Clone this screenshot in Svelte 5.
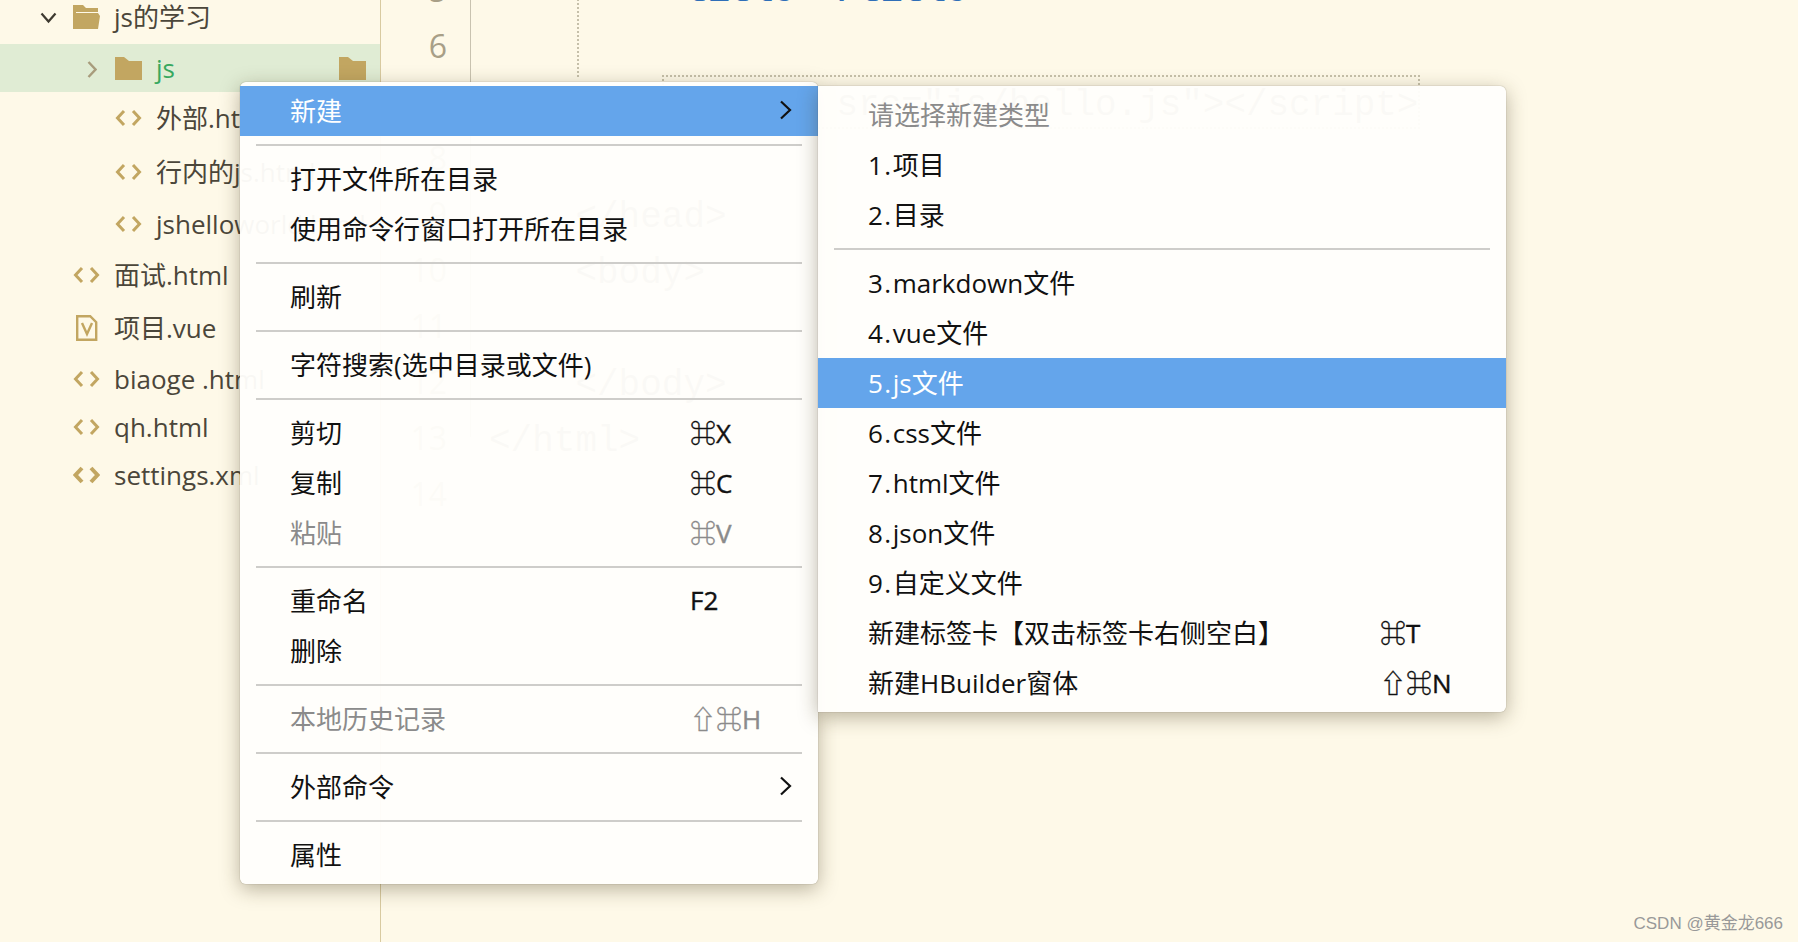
<script lang="ts">
	type TreeRow = { name: string; level: number; h: number; icon: string; caret?: string; active?: boolean };
	type MenuRow = { label?: string; key?: string; sep?: boolean; off?: boolean; on?: boolean; sub?: boolean };

	const tree: TreeRow[] = [
		{ name: 'js的学习', level: 0, h: 54, icon: 'open', caret: 'down' },
		{ name: 'js', level: 1, h: 48, icon: 'folder', caret: 'right', active: true },
		{ name: '外部.html', level: 1, h: 52, icon: 'code' },
		{ name: '行内的js.html', level: 1, h: 55, icon: 'code' },
		{ name: 'jshelloworld.html', level: 1, h: 49, icon: 'code' },
		{ name: '面试.html', level: 0, h: 54, icon: 'code' },
		{ name: '项目.vue', level: 0, h: 51, icon: 'vue' },
		{ name: 'biaoge .html', level: 0, h: 51, icon: 'code' },
		{ name: 'qh.html', level: 0, h: 46, icon: 'code' },
		{ name: 'settings.xml', level: 0, h: 50, icon: 'xml' }
	];

	const lines = [
		'<title></title>',
		'',
		'<script src="js/hello.js"></' + 'script>',
		'',
		'    </head>',
		'    <body>',
		'',
		'    </body>',
		'</html>',
		''
	];

	const mainMenu: MenuRow[] = [
		{ label: '新建', on: true, sub: true },
		{ sep: true },
		{ label: '打开文件所在目录' },
		{ label: '使用命令行窗口打开所在目录' },
		{ sep: true },
		{ label: '刷新' },
		{ sep: true },
		{ label: '字符搜索(选中目录或文件)' },
		{ sep: true },
		{ label: '剪切', key: '⌘X' },
		{ label: '复制', key: '⌘C' },
		{ label: '粘贴', key: '⌘V', off: true },
		{ sep: true },
		{ label: '重命名', key: 'F2' },
		{ label: '删除' },
		{ sep: true },
		{ label: '本地历史记录', key: '⇧⌘H', off: true },
		{ sep: true },
		{ label: '外部命令', sub: true },
		{ sep: true },
		{ label: '属性' }
	];

	const newMenu: MenuRow[] = [
		{ label: '请选择新建类型', off: true },
		{ label: '1.项目' },
		{ label: '2.目录' },
		{ sep: true },
		{ label: '3.markdown文件' },
		{ label: '4.vue文件' },
		{ label: '5.js文件', on: true },
		{ label: '6.css文件' },
		{ label: '7.html文件' },
		{ label: '8.json文件' },
		{ label: '9.自定义文件' },
		{ label: '新建标签卡【双击标签卡右侧空白】', key: '⌘T' },
		{ label: '新建HBuilder窗体', key: '⇧⌘N' }
	];

	// the numbered entries run a little wider in the reference
	function prefix(label = '') {
		return /^\d\./.test(label) ? label.slice(0, 2) : '';
	}
</script>

{#snippet folder()}
	<svg width="27" height="23" viewBox="0 0 27 23"><path d="M0 0h9l5 4h13v19H0z" fill="#c2a661" /></svg>
{/snippet}

{#snippet menu(rows: MenuRow[], cls: string)}
	<div class="menu {cls}">
		{#each rows as row}
			{#if row.sep}
				<div class="sep"></div>
			{:else}
				<div class="item" class:on={row.on} class:off={row.off}>
					<span class="label">{#if prefix(row.label)}<span class="prefix">{prefix(row.label)}</span>{/if}{row.label?.slice(prefix(row.label).length)}</span>
					{#if row.key}<span class="key">{row.key}</span>{/if}
					{#if row.sub}
						<svg class="arrow" width="13" height="20" viewBox="0 0 13 20"><path d="M2 1.500 11 10l-9 8.500" fill="none" stroke="currentColor" stroke-width="2.200" /></svg>
					{/if}
				</div>
			{/if}
		{/each}
	</div>
{/snippet}

<div class="screen">
	<aside class="tree">
		{#each tree as row}
			<div class="row" class:active={row.active} style="height: {row.h}px; padding-left: {40 + row.level * 42}px;">
				<span class="caret">
					{#if row.caret === 'down'}
						<svg width="17" height="12" viewBox="0 0 17 12"><path d="M1.500 1.500 8.500 9.500l7-8" fill="none" stroke="#3e3a30" stroke-width="2.200" /></svg>
					{:else if row.caret === 'right'}
						<svg width="10" height="17" viewBox="0 0 10 17"><path d="M1.500 1 8.500 8.500l-7 7.500" fill="none" stroke="#a89c7c" stroke-width="2.400" /></svg>
					{/if}
				</span>
				<span class="icon">
					{#if row.icon === 'open'}
						<svg width="27" height="24" viewBox="0 0 27 24"><path d="M0 24V0h10l3 3h12v4H3v1h22l2 3-2 13z" fill="#c2a661" /></svg>
					{:else if row.icon === 'folder'}
						{@render folder()}
					{:else if row.icon === 'code' || row.icon === 'xml'}
						<svg width="27" height="18" viewBox="0 0 27 18"><path d="M9 2 2.500 9 9 16M18 2l6.500 7L18 16" fill="none" stroke="#c2a661" stroke-width={row.icon === 'xml' ? 4 : 3} /></svg>
					{:else if row.icon === 'vue'}
						<svg width="22" height="26" viewBox="0 0 22 26"><path d="M1.200 1.200h13l6 6v17.600H1.200z" fill="none" stroke="#c2a661" stroke-width="2.400" /><path d="M6 8l5 11 5-11" fill="none" stroke="#c2a661" stroke-width="2.400" /></svg>
					{/if}
				</span>
				<span class="name">{row.name}</span>
				{#if row.active}
					<span class="end-folder">{@render folder()}</span>
				{/if}
			</div>
		{/each}
	</aside>

	<main class="editor">
		<div class="gutter">
			{#each lines as _, i}
				<div class="num">{i + 5}</div>
			{/each}
		</div>
		<div class="code">
			{#each lines as line, i}
				{#if i === 0}
					<div class="line title">{line}</div>
				{:else if i === 2}
					<div class="line"><span class="current">{line}</span></div>
				{:else}
					<div class="line">{line}</div>
				{/if}
			{/each}
		</div>
		<div class="fold-line"></div>
		<div class="indent-line"></div>
	</main>

	{@render menu(mainMenu, 'main-menu')}
	{@render menu(newMenu, 'new-menu')}

	<div class="watermark">CSDN @黄金龙666</div>
</div>

<style>
	:global(body) {
		margin: 0;
		background: #fef9e8;
	}

	.screen {
		position: relative;
		display: flex;
		width: 1798px;
		height: 942px;
		overflow: hidden;
		background: #fef9e8;
		font-family: 'Open Sans', 'Noto Sans CJK SC', 'DejaVu Sans', sans-serif;
	}

	.tree {
		flex: none;
		width: 380px;
		margin-top: -10px;
		border-right: 1px solid #d8caa0;
	}

	.row {
		display: flex;
		align-items: center;
		box-sizing: border-box;
		font-size: 26px;
		color: #4b463a;
		white-space: nowrap;
	}

	.row.active {
		background: #e0ecd4;
		color: #38a85f;
	}

	.caret {
		flex: none;
		width: 33px;
		display: flex;
		padding-top: 2px;
	}

	.row.active .caret {
		padding-left: 5px;
		box-sizing: border-box;
	}

	.icon {
		flex: none;
		width: 27px;
		display: flex;
		justify-content: center;
		margin-right: 14px;
	}

	.name {
		flex: 1;
		line-height: 1;
	}

	.end-folder {
		display: flex;
		flex: none;
		width: 27px;
		margin-right: 14px;
	}

	.editor {
		position: relative;
		flex: 1;
		display: flex;
		margin-top: -38px;
	}

	.gutter {
		flex: none;
		width: 66px;
		padding-right: 23px;
	}

	.num {
		height: 56px;
		line-height: 56px;
		text-align: right;
		font-size: 32px;
		color: #a89f87;
	}

	.code {
		flex: 1;
		padding: 4px 0 0 19px;
		font-family: 'Liberation Mono', monospace;
		font-size: 36px;
		color: #7c7768;
	}

	.line {
		height: 56px;
		line-height: 56px;
		white-space: pre;
	}

	.line.title {
		height: 52px;
		line-height: 52px;
		margin-bottom: 4px;
		padding-left: 176px;
		color: #2f6fb8;
		font-weight: 700;
	}

	.current {
		display: inline-block;
		margin-left: 175px;
		height: 50px;
		line-height: 58px;
		vertical-align: top;
		margin-top: -1px;
		letter-spacing: -0.05px;
		outline: 2px dotted #c6c0aa;
	}

	.fold-line {
		position: absolute;
		left: 89px;
		top: 0;
		width: 1px;
		height: 475px;
		background: #c9c3b0;
	}

	.indent-line {
		position: absolute;
		left: 196px;
		top: 0;
		height: 115px;
		border-left: 2px dotted #c6c0aa;
	}

	.menu {
		position: absolute;
		box-sizing: border-box;
		padding: 4px 0;
		border-radius: 6px;
		background: rgba(255, 254, 251, 0.965);
		box-shadow:
			0 0 1px rgba(50, 45, 30, 0.65),
			0 5px 20px rgba(60, 50, 20, 0.36);
		font-size: 26px;
		color: #111;
	}

	.main-menu {
		left: 240px;
		top: 82px;
		width: 578px;
		height: 802px;
	}

	.new-menu {
		left: 818px;
		top: 86px;
		width: 688px;
		height: 626px;
		border-top-left-radius: 0;
		border-bottom-left-radius: 0;
	}

	.item {
		display: flex;
		align-items: center;
		height: 50px;
		padding: 0 0 3px 50px;
		box-sizing: border-box;
		white-space: nowrap;
		position: relative;
	}

	.item.on {
		background: rgba(92, 160, 234, 0.95);
		color: #fff;
	}

	.item.off {
		color: #8b8b8b;
	}

	.label {
		flex: 1;
	}

	.prefix {
		letter-spacing: 1.500px;
	}

	.key {
		flex: none;
		width: 128px;
		-webkit-text-stroke: 0.4px currentColor;
	}

	.new-menu .key {
		width: 126px;
	}

	.arrow {
		position: absolute;
		right: 26px;
		color: #111;
	}

	.sep {
		height: 18px;
		margin: 0 16px;
		display: flex;
		align-items: center;
	}

	.sep::before {
		content: '';
		flex: 1;
		height: 2px;
		background: #cecdca;
	}

	.watermark {
		position: absolute;
		right: 15px;
		bottom: 8px;
		font-family: 'Liberation Sans', 'Noto Sans CJK SC', sans-serif;
		font-size: 17px;
		color: #999;
	}
</style>
